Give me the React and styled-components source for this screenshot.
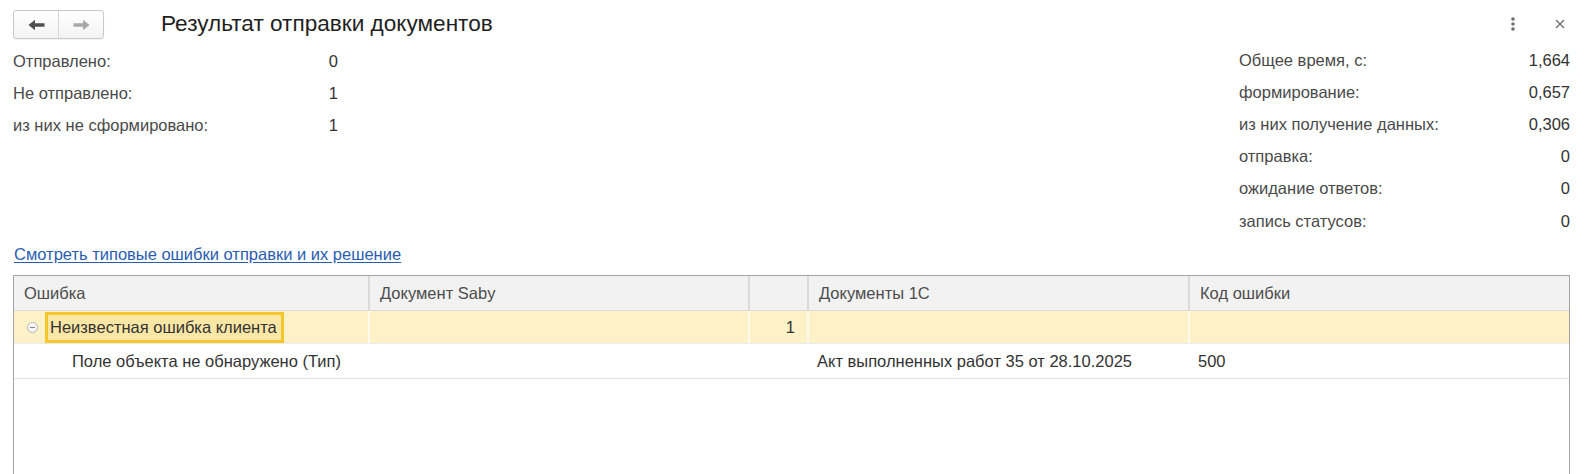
import React from "react";
import styled, { createGlobalStyle } from "styled-components";

const Global = createGlobalStyle`
  html, body { margin: 0; padding: 0; background: #fff; }
  body { font-family: Arial, "Liberation Sans", sans-serif; color: #404040; }
  * { box-sizing: border-box; }
`;

const Page = styled.div`
  width: 1592px;
  height: 474px;
  overflow: hidden;
  display: flex;
  flex-direction: column;
`;

const TopBar = styled.div`
  display: flex;
  align-items: center;
  height: 48px;
  padding: 0 0 0 13px;
`;

const NavGroup = styled.div`
  display: flex;
  width: 91px;
  height: 29px;
  border: 1px solid #c9c9c9;
  border-radius: 3px;
  background: linear-gradient(#ffffff, #f3f3f3);
  box-shadow: 0 1px 1px rgba(0,0,0,0.06);
  margin-top: 1px;
`;

const NavButton = styled.div`
  flex: 1;
  display: flex;
  align-items: center;
  justify-content: center;
  & + & { border-left: 1px solid #d6d6d6; }
`;

const Title = styled.div`
  margin-left: 57px;
  font-size: 22.6px;
  color: #1f1f1f;
  flex: 1;
  padding-bottom: 1px;
`;

const IconBtn = styled.div`
  width: 20px;
  height: 20px;
  display: flex;
  align-items: center;
  justify-content: center;
  margin-right: ${(p) => p.$mr}px;
`;

const Summary = styled.div`
  display: flex;
  justify-content: space-between;
  padding: 0 22px 0 13px;
`;

const StatGrid = styled.div`
  display: grid;
  grid-template-columns: 1fr auto;
  width: ${(p) => p.$w}px;
  grid-auto-rows: ${(p) => p.$rh}px;
  align-items: center;
  font-size: 16.5px;
  margin-top: ${(p) => p.$mt}px;
`;

const Label = styled.div`
  color: #4a4a4a;
`;

const Value = styled.div`
  color: #333;
  text-align: right;
`;

const LinkRow = styled.div`
  padding: 0 0 0 14px;
  margin-top: 4px;
  height: 26px;
  display: flex;
  align-items: center;
`;

const Link = styled.a`
  font-size: 16.5px;
  color: #2a5db0;
  text-decoration: underline;
  text-underline-offset: 2px;
  cursor: pointer;
`;

const Table = styled.div`
  margin: 8px 0 0 13px;
  width: 1557px;
  flex: 1;
  border: 1px solid #a3a3a3;
  border-bottom: none;
  display: flex;
  flex-direction: column;
  font-size: 16.5px;
`;

const cols = "354px 380px 59px 381px 381px";

const HeadRow = styled.div`
  display: grid;
  grid-template-columns: ${cols};
  height: 35px;
  background: #f2f2f2;
  border-bottom: 1px solid #dcdcdc;
`;

const HeadCell = styled.div`
  display: flex;
  align-items: center;
  padding-left: 10px;
  color: #4d4d4d;
  border-left: ${(p) => (p.$first ? "none" : "2px solid #dadada")};
`;

const Row = styled.div`
  display: grid;
  grid-template-columns: ${cols};
  height: ${(p) => p.$h}px;
  background: ${(p) => (p.$group ? "#fdf1c8" : "#fff")};
  border-bottom: 1px solid ${(p) => (p.$group ? "#ececec" : "#e3e3e3")};
`;

const Cell = styled.div`
  display: flex;
  align-items: center;
  justify-content: ${(p) => (p.$right ? "flex-end" : "flex-start")};
  padding: 0 ${(p) => (p.$right ? 12 : 0)}px 0 ${(p) => p.$pl ?? 10}px;
  color: #333;
  border-left: ${(p) => (p.$divider ? "2px solid #fffaf0" : "none")};
  white-space: nowrap;
`;

const TreeToggle = styled.div`
  width: 11px;
  height: 11px;
  border-radius: 50%;
  border: 1px solid #b8b8b8;
  background: #f6f6f6;
  display: flex;
  align-items: center;
  justify-content: center;
  margin-left: 13px;
  margin-right: 7px;
  &::after {
    content: "";
    width: 5px;
    height: 1px;
    background: #888;
  }
`;

const Selected = styled.div`
  height: 31px;
  display: flex;
  align-items: center;
  padding: 0 4px 0 2px;
  border: 3px solid #f5c72e;
  background: #fbe7a5;
  color: #333;
`;

const Empty = styled.div`
  flex: 1;
`;

const BackArrow = ({ color }) => (
  <svg width="17" height="12" viewBox="0 0 17 12">
    <path d="M0.5 6 L7 0.8 L7 4.3 L16.5 4.3 L16.5 7.7 L7 7.7 L7 11.2 Z" fill={color} />
  </svg>
);

const FwdArrow = ({ color }) => (
  <svg width="17" height="12" viewBox="0 0 17 12">
    <path d="M16.5 6 L10 0.8 L10 4.3 L0.5 4.3 L0.5 7.7 L10 7.7 L10 11.2 Z" fill={color} />
  </svg>
);

const MoreIcon = () => (
  <svg width="6" height="16" viewBox="0 0 6 16">
    <circle cx="3" cy="3" r="1.8" fill="#6f6f6f" />
    <circle cx="3" cy="8" r="1.8" fill="#6f6f6f" />
    <circle cx="3" cy="13" r="1.8" fill="#6f6f6f" />
  </svg>
);

const CloseIcon = () => (
  <svg width="10" height="10" viewBox="0 0 10 10">
    <path d="M1 1 L9 9 M9 1 L1 9" stroke="#6f6f6f" strokeWidth="1.4" />
  </svg>
);

const left = [
  ["Отправлено:", "0"],
  ["Не отправлено:", "1"],
  ["из них не сформировано:", "1"],
];

const right = [
  ["Общее время, с:", "1,664"],
  ["формирование:", "0,657"],
  ["из них получение данных:", "0,306"],
  ["отправка:", "0"],
  ["ожидание ответов:", "0"],
  ["запись статусов:", "0"],
];

export default function App() {
  return (
    <Page>
      <Global />
      <TopBar>
        <NavGroup>
          <NavButton><BackArrow color="#4f4f4f" /></NavButton>
          <NavButton><FwdArrow color="#a9a9a9" /></NavButton>
        </NavGroup>
        <Title>Результат отправки документов</Title>
        <IconBtn $mr={27}><MoreIcon /></IconBtn>
        <IconBtn $mr={22}><CloseIcon /></IconBtn>
      </TopBar>
      <Summary>
        <StatGrid $w={325} $rh={32} $mt={-3}>
          {left.map(([l, v]) => (
            <React.Fragment key={l}>
              <Label>{l}</Label>
              <Value>{v}</Value>
            </React.Fragment>
          ))}
        </StatGrid>
        <StatGrid $w={331} $rh={32.2} $mt={-4}>
          {right.map(([l, v]) => (
            <React.Fragment key={l}>
              <Label>{l}</Label>
              <Value>{v}</Value>
            </React.Fragment>
          ))}
        </StatGrid>
      </Summary>
      <LinkRow>
        <Link>Смотреть типовые ошибки отправки и их решение</Link>
      </LinkRow>
      <Table>
        <HeadRow>
          <HeadCell $first>Ошибка</HeadCell>
          <HeadCell>Документ Saby</HeadCell>
          <HeadCell />
          <HeadCell>Документы 1С</HeadCell>
          <HeadCell>Код ошибки</HeadCell>
        </HeadRow>
        <Row $group $h={33}>
          <Cell $pl={0}>
            <TreeToggle />
            <Selected>Неизвестная ошибка клиента</Selected>
          </Cell>
          <Cell $divider />
          <Cell $divider $right>1</Cell>
          <Cell $divider />
          <Cell $divider />
        </Row>
        <Row $h={35}>
          <Cell $pl={58}>Поле объекта не обнаружено (Тип)</Cell>
          <Cell />
          <Cell />
          <Cell>Акт выполненных работ 35 от 28.10.2025</Cell>
          <Cell>500</Cell>
        </Row>
        <Empty />
      </Table>
    </Page>
  );
}
